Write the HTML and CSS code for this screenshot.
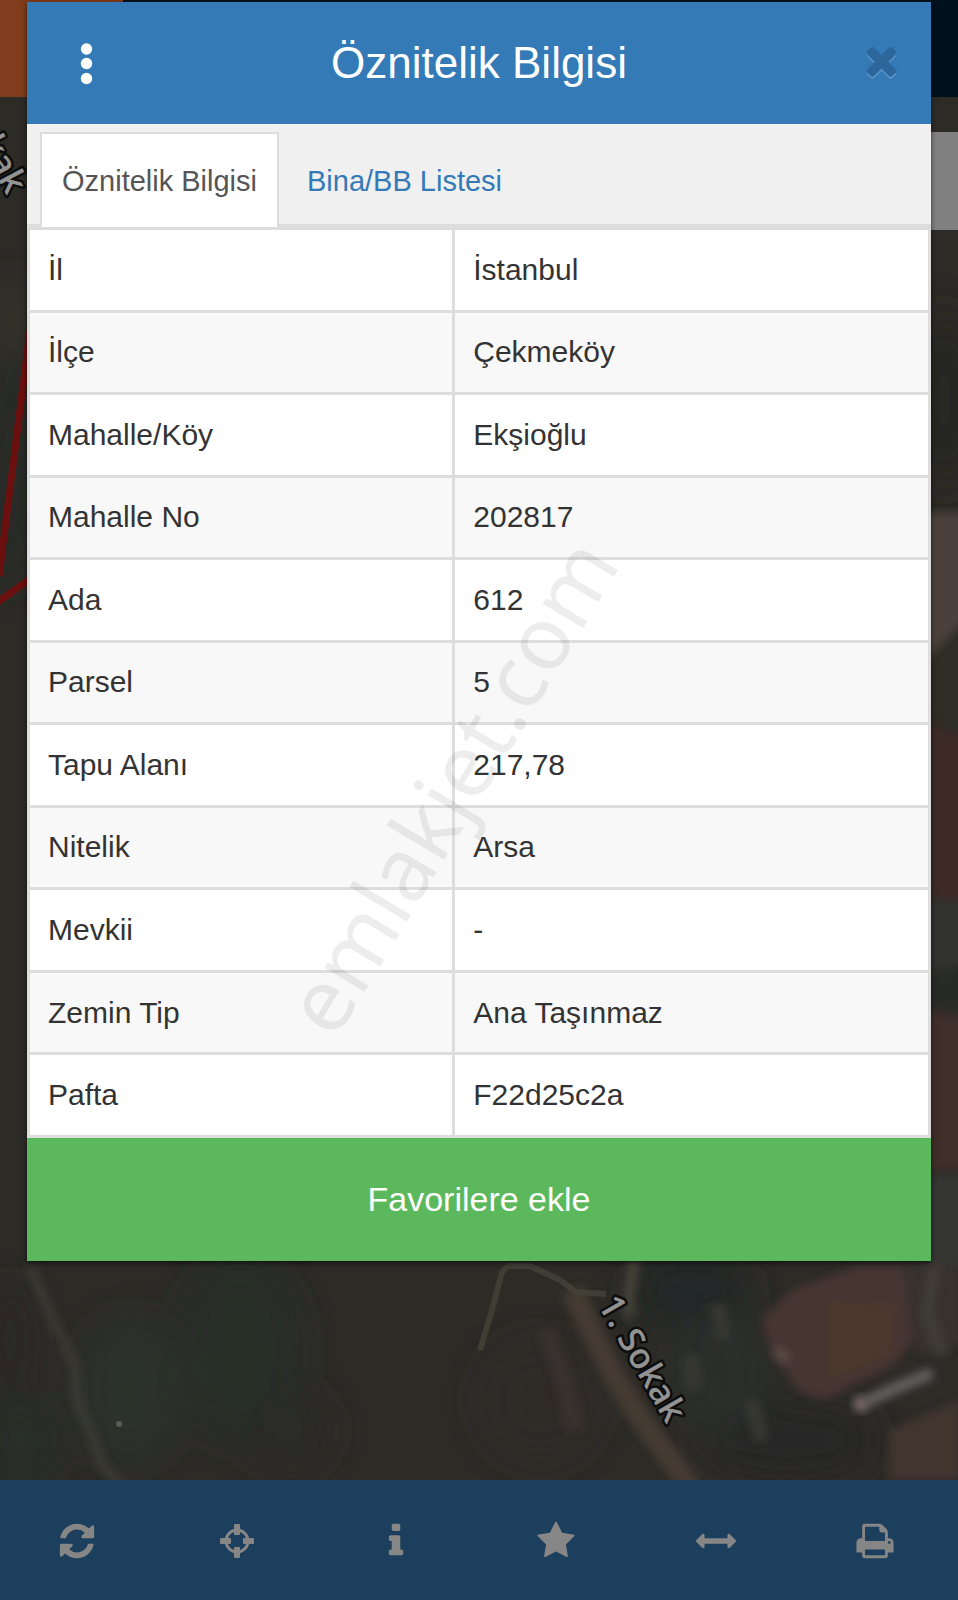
FILE: index.html
```html
<!DOCTYPE html>
<html lang="tr">

<head>
    <meta charset="UTF-8">
    <meta name="viewport" content="width=device-width, initial-scale=1.0">

    <title>Öznitelik Bilgisi</title>

    <link rel="stylesheet" href="styles.css">
</head>

<body>
    <div class="topbar">
        <div class="topbar-menu"></div>
    </div>

    <div class="map">
        <svg class="map-image" viewBox="0 97 958 1383" preserveAspectRatio="xMidYMid slice">
            <defs>
                <filter id="soft" x="-20%" y="-20%" width="140%" height="140%">
                    <feGaussianBlur stdDeviation="4" />
                </filter>
                <filter id="softer" x="-50%" y="-50%" width="200%" height="200%">
                    <feGaussianBlur stdDeviation="18" />
                </filter>
            </defs>
            <rect x="0" y="97" width="958" height="1383" fill="#2c2b26" />

            <!-- fields -->
            <g filter="url(#softer)">
                <ellipse cx="130" cy="1390" rx="50" ry="70" fill="#29302a" />
                <ellipse cx="240" cy="1350" rx="60" ry="90" fill="#282d26" />
                <ellipse cx="20" cy="1440" rx="40" ry="40" fill="#282e27" />
                <ellipse cx="10" cy="1340" rx="20" ry="60" fill="#292827" />
                <ellipse cx="290" cy="1430" rx="40" ry="40" fill="#292a28" />
                <ellipse cx="540" cy="1400" rx="60" ry="60" fill="#2f2c26" />
                <ellipse cx="690" cy="1290" rx="60" ry="40" fill="#232726" />
                <ellipse cx="790" cy="1440" rx="90" ry="40" fill="#262827" />
                <ellipse cx="720" cy="1370" rx="50" ry="60" fill="#2c2e2b" />
                <ellipse cx="10" cy="470" rx="22" ry="120" fill="#252a26" />
                <ellipse cx="10" cy="320" rx="22" ry="40" fill="#34312b" />
                <ellipse cx="945" cy="400" rx="30" ry="90" fill="#252722" />
            </g>

            <!-- buildings on the right -->
            <g filter="url(#soft)">
                <path d="M920 512h60v110l-60 40z" fill="#4b403b" />
                <path d="M920 665l60-60v130l-60-22z" fill="#2d2e25" />
                <path d="M920 720l60 22v170l-60-20z" fill="#3c2a28" />
                <path d="M920 900h60v70h-60z" fill="#33302e" />
                <path d="M920 985l60-30v50h-60z" fill="#282a26" />
                <path d="M920 1010l60 10v150h-60z" fill="#3f2f29" />
                <path d="M920 1175h60v90h-60z" fill="#353532" />
                <path d="M762 1318l30-28 70-25h40l12 75-20 25-70 35-24-8-30-40z" fill="#463431" />
                <path d="M830 1300l65 5-5 50-60 25z" fill="#4b372e" />
                <path d="M900 1265h60v80l-40 10z" fill="#39332f" />
                <path d="M890 1430l70-30v80h-72z" fill="#43352e" />
            </g>

            <!-- paths and tracks -->
            <g filter="url(#soft)" fill="none">
                <path d="M572 1290l36 75 30 50 55 75" stroke="#443a33" stroke-width="22" />
                <path d="M30 1265l25 60 20 40 2 35 15 35 10 30 20 20" stroke="#3b3a34" stroke-width="9" />
                <path d="M635 1255l-6 40v22" stroke="#47443b" stroke-width="10" />
                <path d="M545 1330l20 50 10 50" stroke="#38322d" stroke-width="18" />
                <path d="M866 1402l30-14 36-15" stroke="#62605b" stroke-width="12" />
                <path d="M776 1350l12 10" stroke="#5a5049" stroke-width="9" />
                <path d="M718 1305l6 34M750 1400l12 40M690 1355l4 35" stroke="#373833" stroke-width="14" />
                <path d="M935 1265l-8 50 16 40" stroke="#3f3c37" stroke-width="12" />
            </g>
            <path d="M480 1350l12-40 10-38 6-6h22l30 14 16 12 30 2" fill="none" stroke="#45433a" stroke-width="6" stroke-linejoin="round" opacity=".8" />
            <circle cx="861" cy="1404" r="8" fill="#78686a" filter="url(#soft)" />
            <circle cx="119" cy="1424" r="3" fill="#5a5c55" />

            <!-- parcel border -->
            <path d="M30 330L-1 576M30 579L-2 602" fill="none" stroke="#6b100f" stroke-width="7" />

            <text class="street" transform="translate(597 1304) rotate(60)">1. Sokak</text>
            <text class="street" text-anchor="end" transform="translate(7 196) rotate(62)">Sokak</text>
        </svg>
        <div class="map-control"></div>
    </div>

    <nav class="toolbar">
        <button class="tool" aria-label="Yenile">
            <svg viewBox="0 0 1792 1792"><path d="M1639 1056q0 5-1 7-64 268-268 434.5t-478 166.500q-146 0-282.500-55t-243.500-157l-129 129q-19 19-45 19t-45-19-19-45v-448q0-26 19-45t45-19h448q26 0 45 19t19 45-19 45l-137 137q71 66 161 102t187 36q134 0 250-65t186-179q11-17 53-117 8-23 30-23h192q13 0 22.500 9.500t9.500 22.500zm25-800v448q0 26-19 45t-45 19h-448q-26 0-45-19t-19-45 19-45l138-138q-148-137-349-137-134 0-250 65t-186 179q-11 17-53 117-8 23-30 23h-199q-13 0-22.500-9.500t-9.500-22.500v-7q65-268 270-434.500t480-166.500q146 0 284 55.500t245 156.500l130-129q19-19 45-19t45 19 19 45z" /></svg>
        </button>
        <button class="tool" aria-label="Konum">
            <svg viewBox="0 0 40 40">
                <circle cx="20" cy="20" r="11" fill="none" stroke="currentColor" stroke-width="3" />
                <path d="M17 4a1 1 0 0 1 1-1h4a1 1 0 0 1 1 1v9a1 1 0 0 1-1 1h-4a1 1 0 0 1-1-1zM17 27a1 1 0 0 1 1-1h4a1 1 0 0 1 1 1v9a1 1 0 0 1-1 1h-4a1 1 0 0 1-1-1zM4 17h9a1 1 0 0 1 1 1v4a1 1 0 0 1-1 1h-9a1 1 0 0 1-1-1v-4a1 1 0 0 1 1-1zM27 17h9a1 1 0 0 1 1 1v4a1 1 0 0 1-1 1h-9a1 1 0 0 1-1-1v-4a1 1 0 0 1 1-1z" />
            </svg>
        </button>
        <button class="tool" aria-label="Bilgi">
            <svg viewBox="0 0 1792 1792"><path d="M1216 1344v128q0 26-19 45t-45 19h-512q-26 0-45-19t-19-45v-128q0-26 19-45t45-19h64v-384h-64q-26 0-45-19t-19-45v-128q0-26 19-45t45-19h384q26 0 45 19t19 45v576h64q26 0 45 19t19 45zm-128-1152v192q0 26-19 45t-45 19h-256q-26 0-45-19t-19-45v-192q0-26 19-45t45-19h256q26 0 45 19t19 45z" /></svg>
        </button>
        <button class="tool" aria-label="Favoriler">
            <svg viewBox="0 0 1792 1792"><path d="M1728 647q0 22-26 48l-363 354 86 500q1 7 1 20 0 21-10.500 35.500t-30.500 14.500q-19 0-40-12l-449-236-449 236q-22 12-40 12-21 0-31.500-14.500t-10.500-35.500q0-6 2-20l86-500-364-354q-25-27-25-48 0-37 56-46l502-73 225-455q19-41 49-41t49 41l225 455 502 73q56 9 56 46z" /></svg>
        </button>
        <button class="tool" aria-label="Ölçüm">
            <svg viewBox="0 0 1792 1792"><path d="M1792 896q0 26-19 45l-256 256q-19 19-45 19t-45-19-19-45v-128h-1024v128q0 26-19 45t-45 19-45-19l-256-256q-19-19-19-45t19-45l256-256q19-19 45-19t45 19 19 45v128h1024v-128q0-26 19-45t45-19 45 19l256 256q19 19 19 45z" /></svg>
        </button>
        <button class="tool" aria-label="Yazdır">
            <svg viewBox="0 0 1792 1792"><path d="M448 1536h896v-256h-896v256zm0-640h896v-384h-160q-40 0-68-28t-28-68v-160h-640v640zm1152 64q0-26-19-45t-45-19-45 19-19 45 19 45 45 19 45-19 19-45zm128 0v416q0 13-9.500 22.500t-22.500 9.500h-224v160q0 40-28 68t-68 28h-960q-40 0-68-28t-28-68v-160h-224q-13 0-22.500-9.500t-9.500-22.500v-416q0-79 56.500-135.500t135.500-56.500h64v-544q0-40 28-68t68-28h672q40 0 88 20t76 48l152 152q28 28 48 76t20 88v256h64q79 0 135.500 56.500t56.500 135.500z" /></svg>
        </button>
    </nav>

    <main class="dialog" role="dialog" aria-labelledby="baslik">
        <header class="dialog-header">
            <button class="header-button" aria-label="Menü">
                <svg viewBox="0 0 45 45">
                    <circle cx="22.500" cy="8" r="5.700" />
                    <circle cx="22.500" cy="22.500" r="5.700" />
                    <circle cx="22.500" cy="37.500" r="5.700" />
                </svg>
            </button>
            <h1 id="baslik">Öznitelik Bilgisi</h1>
            <button class="header-button close" aria-label="Kapat">
                <svg viewBox="0 128 1792 1792"><path d="M1490 1322q0 40-28 68l-136 136q-28 28-68 28t-68-28l-294-294-294 294q-28 28-68 28t-68-28l-136-136q-28-28-28-68t28-68l294-294-294-294q-28-28-28-68t28-68l136-136q28-28 68-28t68 28l294 294 294-294q28-28 68-28t68 28l136 136q28 28 28 68t-28 68l-294 294 294 294q28 28 28 68z" /></svg>
            </button>
        </header>

        <nav class="tabs">
            <a class="tab active" href="#oznitelik">Öznitelik Bilgisi</a>
            <a class="tab" href="#bina">Bina/BB Listesi</a>
        </nav>

        <table class="info" id="oznitelik">
            <tr><th scope="row">İl</th><td>İstanbul</td></tr>
            <tr><th scope="row">İlçe</th><td>Çekmeköy</td></tr>
            <tr><th scope="row">Mahalle/Köy</th><td>Ekşioğlu</td></tr>
            <tr><th scope="row">Mahalle No</th><td>202817</td></tr>
            <tr><th scope="row">Ada</th><td>612</td></tr>
            <tr><th scope="row">Parsel</th><td>5</td></tr>
            <tr><th scope="row">Tapu Alanı</th><td>217,78</td></tr>
            <tr><th scope="row">Nitelik</th><td>Arsa</td></tr>
            <tr><th scope="row">Mevkii</th><td>-</td></tr>
            <tr><th scope="row">Zemin Tip</th><td>Ana Taşınmaz</td></tr>
            <tr><th scope="row">Pafta</th><td>F22d25c2a</td></tr>
        </table>

        <button class="favorite">Favorilere ekle</button>
    </main>

    <div class="watermark"><span>emlakjet.com</span></div>
</body>

</html>
```

FILE: styles.css
```css
* {
    margin: 0;
    padding: 0;
    box-sizing: border-box;
}

body {
    position: relative;
    min-height: 100vh;

    display: flex;
    flex-direction: column;

    font-family: "Liberation Sans", Arial, sans-serif;
    font-size: 29px;
    color: #333;
    background-color: #2b2a25;
}

button {
    border: none;
    background: none;
    font-family: inherit;
    cursor: pointer;
}

svg {
    display: block;
    fill: currentColor;
}

/* page behind the dialog */
.topbar {
    height: 97px;
    background-color: #00111e;
}

.topbar-menu {
    width: 123px;
    height: 100%;
    background-color: #803c1c;
}

.map {
    position: relative;
    flex: 1;
    overflow: hidden;
}

.map-image {
    position: absolute;
    width: 100%;
    height: 100%;
}

.map-control {
    position: absolute;
    top: 35px;
    right: 0;
    width: 60px;
    height: 98px;
    background-color: #808080;
}

.street {
    font-family: "Open Sans", sans-serif;
    font-size: 35px;
    font-weight: 600;
    fill: #929292;
    stroke: #0d0d0d;
    stroke-width: 5px;
    stroke-linejoin: round;
    paint-order: stroke;
}

.toolbar {
    display: flex;
    height: 120px;
    background-color: #1b3f5c;
}

.tool {
    flex: 1;
    display: flex;
    justify-content: center;
    align-items: center;
    padding: 2px 6px 0 0;
    color: #868686;
}

.tool svg {
    width: 40px;
    height: 40px;
}

/* dialog */
.dialog {
    position: absolute;
    top: 2px;
    left: 27px;
    right: 27px;
    background-color: #fff;
    box-shadow: 0 2px 5px rgba(0, 0, 0, 0.6);
}

.dialog-header {
    display: flex;
    justify-content: space-between;
    align-items: center;
    height: 122px;
    padding: 0 27px;
    background-color: #337ab7;
    color: #fff;
}

.dialog-header h1 {
    font-size: 44px;
    font-weight: normal;
}

.header-button {
    display: flex;
    justify-content: center;
    width: 64px;
    color: #fff;
}

.header-button svg {
    width: 45px;
    height: 45px;
}

.header-button.close {
    justify-content: flex-end;
    color: #2c669a;
    filter: drop-shadow(0 2px 0 rgba(255, 255, 255, 0.2));
}

.tabs {
    display: flex;
    gap: 6px;
    padding: 8px 13px 0;
    background-color: #f0f0f0;
    border-bottom: 3px solid #ddd;
}

.tab {
    padding: 27px 20px 26px;
    margin-bottom: -3px;
    border: 2px solid transparent;
    border-bottom: none;
    line-height: 40px;
    color: #337ab7;
    text-decoration: none;
}

.tab.active {
    background-color: #fff;
    border-color: #ddd;
    color: #555;
}

.info {
    width: 100%;
    height: 911px;
    border-collapse: collapse;
    font-size: 30px;
}

.info th,
.info td {
    padding: 0 18px;
    border: 3px solid #ddd;
    font-weight: normal;
    text-align: left;
}

.info th {
    width: 47.2%;
}

.info tr:nth-child(even) {
    background-color: #f8f8f8;
}

.favorite {
    display: block;
    width: 100%;
    height: 123px;
    background-color: #5cb85c;
    color: #fff;
    font-size: 34px;
}

.watermark {
    position: absolute;
    inset: 0;
    display: flex;
    justify-content: center;
    align-items: center;
    padding: 0 60px 30px 0;
    overflow: hidden;
    pointer-events: none;
    font-family: "Noto Sans", sans-serif;
    font-size: 88px;
    color: rgba(0, 0, 0, 0.07);
}

.watermark span {
    transform: rotate(-59deg);
}
```
